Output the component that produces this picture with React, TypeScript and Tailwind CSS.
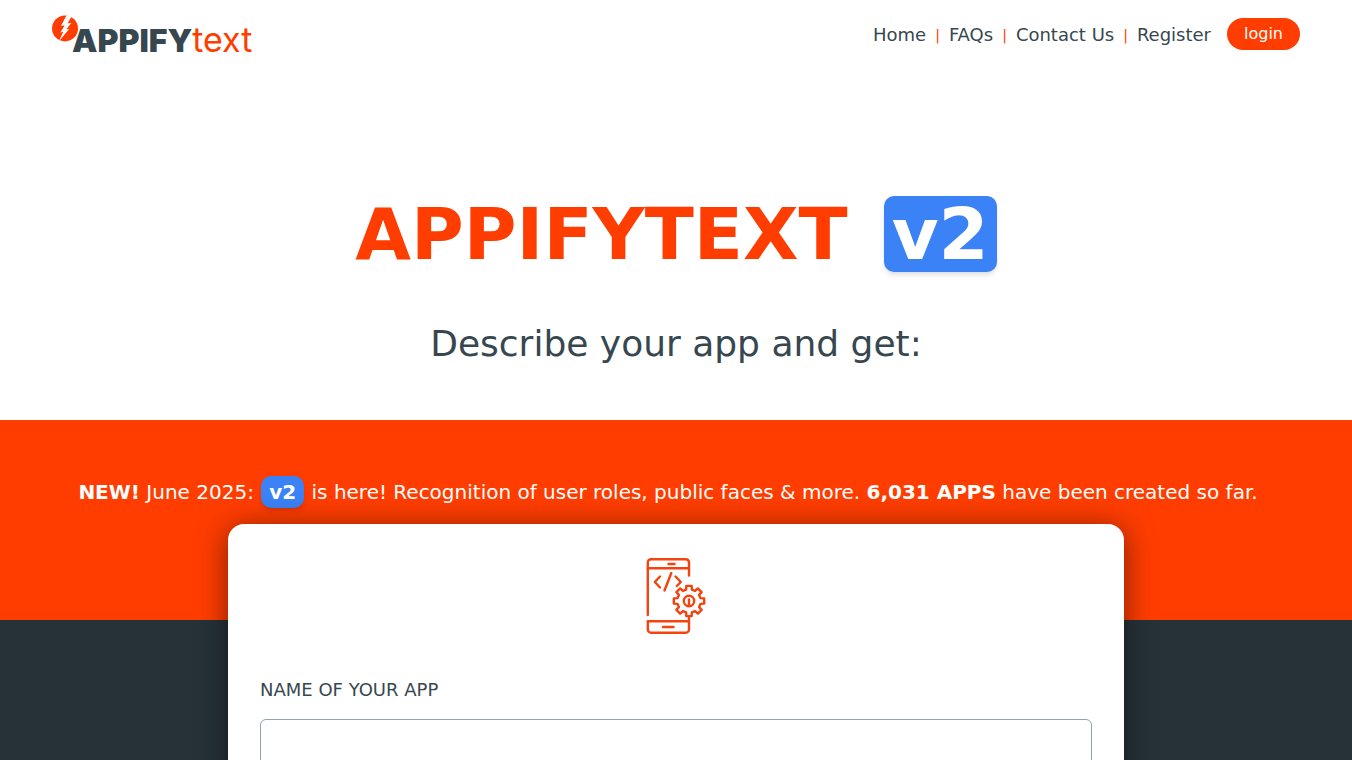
import { Fragment } from 'react';

const NAV_LINKS = [
  { label: 'Home', href: '#home' },
  { label: 'FAQs', href: '#faqs' },
  { label: 'Contact Us', href: '#contact' },
  { label: 'Register', href: '#register' },
];

// Outline of a cog with eight teeth
function gearPoints(cx: number, cy: number, outer: number, inner: number) {
  const points: string[] = [];
  for (let i = 0; i < 8; i++) {
    const steps: [number, number][] = [[-14, inner], [-10, outer], [10, outer], [14, inner]];
    for (const [offset, radius] of steps) {
      const angle = ((i * 45 + offset) * Math.PI) / 180;
      points.push(`${(cx + radius * Math.cos(angle)).toFixed(2)},${(cy + radius * Math.sin(angle)).toFixed(2)}`);
    }
  }
  return points.join(' ');
}

function Logo() {
  return (
    <a href="#home" className="flex items-start">
      <svg viewBox="0 0 26 27" className="w-[26px] h-[27px] shrink-0" aria-hidden="true">
        <circle cx="13" cy="13.4" r="13" fill="#ff3d00" />
        <path d="M14.5.4 9 10.8l3.6-.4-4.2 7 2.9-.6-4.6 9.6 10.7-12.6-3.1.5 5-6.3-3.6.3L19.5 1.6z" fill="#fff" />
      </svg>
      <span className="-ml-[6px] mt-2 flex items-baseline font-[family-name:Inter,sans-serif] leading-none">
        <span className="text-[32px] leading-none font-black text-[#37474f]">APPIFY</span>
        <span className="text-[34px] leading-none text-[#ff3d00]">text</span>
      </span>
    </a>
  );
}

function PhoneIcon() {
  return (
    <svg
      viewBox="0 0 60 77"
      className="w-[60px] h-[77px]"
      fill="none"
      stroke="#f4430f"
      strokeWidth="2.4"
      strokeLinecap="round"
      strokeLinejoin="round"
      aria-hidden="true"
    >
      <path d="M1.8 58V5.4A3.2 3.2 0 0 1 5 2.2h34.6a3.4 3.4 0 0 1 3.4 3.2V18.5" />
      <path d="M1.8 11.3H43M22.5 7h6" />
      <path d="M43 60.5v12a3.2 3.2 0 0 1-3.2 3.2H5a3.2 3.2 0 0 1-3.2-3.2V64.2H43M17 70h10.5" />
      <path d="M14 19.5 8.8 25l5.2 5.5M25.3 16 18.5 33.5M29.5 19.5 34.8 25l-4 4" />
      <polygon points={gearPoints(43, 44, 15.4, 11.8)} />
      <circle cx="43" cy="44" r="5.2" />
      <path d="M43 42.5v5" />
    </svg>
  );
}

function Header() {
  return (
    <header className="mx-auto flex w-full max-w-7xl items-start justify-between px-4 pt-[15px]">
      <Logo />
      <nav className="flex items-center pt-[3px] text-lg text-[#37474f]">
        {NAV_LINKS.map((link, i) => (
          <Fragment key={link.label}>
            {i > 0 && <span className="px-[9px] pt-0.5 text-sm text-[#ff3d00]">|</span>}
            <a href={link.href} className="pt-0.5">{link.label}</a>
          </Fragment>
        ))}
        <button className="ml-4 h-8 rounded-full bg-[#ff3d00] px-[17px] text-base text-white">login</button>
      </nav>
    </header>
  );
}

export default function App() {
  return (
    <div className="flex min-h-screen flex-col bg-white font-[family-name:DejaVu_Sans,sans-serif] text-[#37474f]">
      <Header />

      <section className="px-4 pt-[139px] pb-[52px] text-center">
        <h1 className="flex items-center justify-center gap-9 text-7xl leading-none font-bold text-[#ff3d00]">
          APPIFYTEXT
          <span className="rounded-[10px] bg-[#3b82f6] px-2 py-[2px] text-white shadow-md">v2</span>
        </h1>
        <p className="mt-12 text-4xl leading-[48px]">Describe your app and get:</p>
      </section>

      <section className="bg-[#ff3d00] pt-14 pr-8 pb-28 pl-4 text-center text-xl leading-8 text-white">
        <p>
          <strong>NEW!</strong> June 2025:{' '}
          <span className="mx-px inline-block rounded-[10px] bg-[#3b82f6] px-2 font-bold shadow-md">v2</span> is here!
          Recognition of user roles, public faces &amp; more. <strong>6,031 APPS</strong> have been created so far.
        </p>
      </section>

      <main className="flex-1 bg-[#263238] px-4">
        <form className="relative mx-auto -mt-24 max-w-4xl rounded-2xl bg-white px-8 pt-[33px] pb-8 shadow-[0_4px_30px_rgba(0,0,0,0.5)]">
          <div className="flex justify-center">
            <PhoneIcon />
          </div>
          <label htmlFor="app-name" className="mt-10 block text-lg leading-8">
            NAME OF YOUR APP
          </label>
          <input
            id="app-name"
            type="text"
            className="mt-[13px] block h-14 w-full rounded-md border border-[#90a4ae] bg-white px-4 text-lg"
          />
        </form>
      </main>
    </div>
  );
}
